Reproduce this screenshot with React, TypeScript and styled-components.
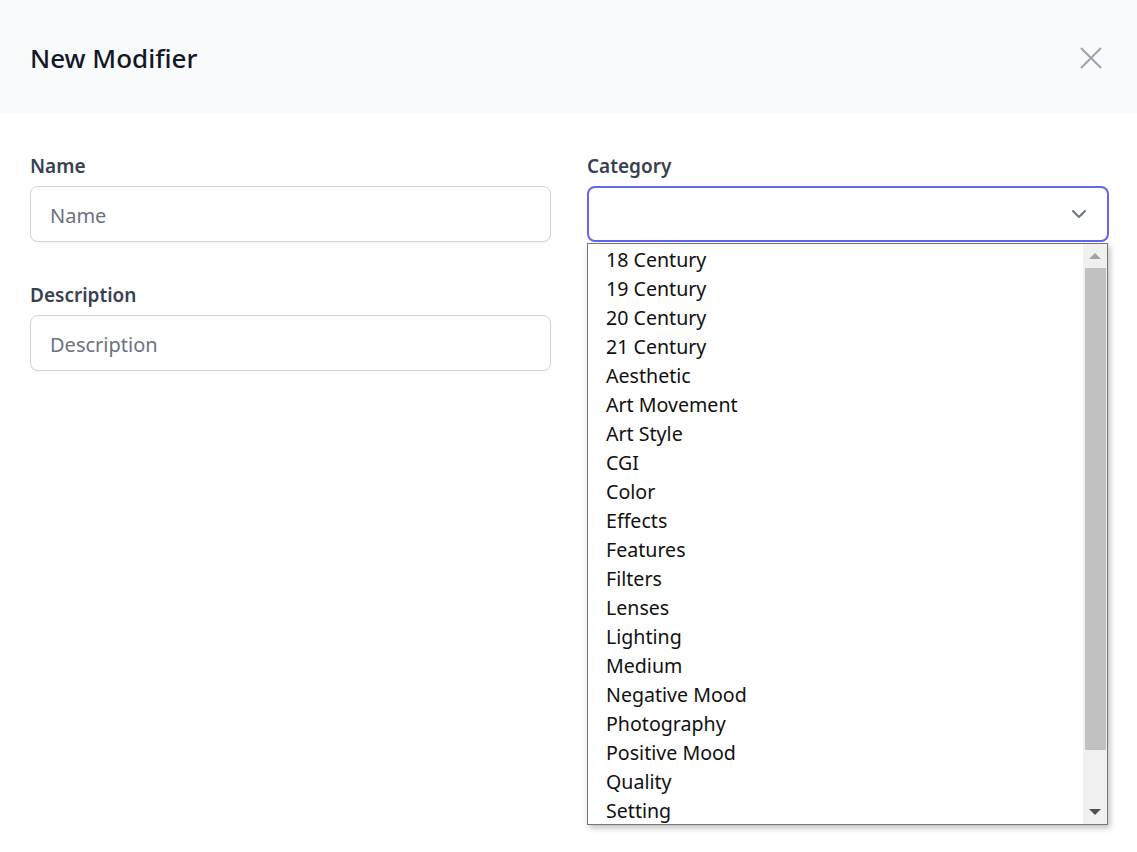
import React from "react";
import styled, { createGlobalStyle } from "styled-components";

const GlobalStyle = createGlobalStyle`
  html, body {
    margin: 0;
    padding: 0;
    background: #ffffff;
    font-family: "Noto Sans", "Open Sans", sans-serif;
  }
  * {
    box-sizing: border-box;
  }
`;

const categories = [
  "18 Century",
  "19 Century",
  "20 Century",
  "21 Century",
  "Aesthetic",
  "Art Movement",
  "Art Style",
  "CGI",
  "Color",
  "Effects",
  "Features",
  "Filters",
  "Lenses",
  "Lighting",
  "Medium",
  "Negative Mood",
  "Photography",
  "Positive Mood",
  "Quality",
  "Setting",
];

const Modal = styled.div`
  width: 1137px;
  height: 852px;
  background: #ffffff;
  overflow: hidden;
`;

const Header = styled.header`
  display: flex;
  align-items: center;
  justify-content: space-between;
  height: 113px;
  padding: 2px 35px 0 30px;
  background: #f9fafb;
`;

const Title = styled.h2`
  margin: 0;
  font-size: 26px;
  font-weight: 500;
  color: #111827;
`;

const CloseButton = styled.button`
  display: flex;
  align-items: center;
  justify-content: center;
  padding: 0;
  border: none;
  background: transparent;
  color: #9ca3af;
  cursor: pointer;
`;

const Form = styled.form`
  display: grid;
  grid-template-columns: 521px 522px;
  column-gap: 36px;
  row-gap: 40px;
  padding: 40px 28px 0 30px;
  align-items: start;
`;

const Field = styled.div`
  position: relative;
  display: flex;
  flex-direction: column;
  gap: 6px;
`;

const Label = styled.label`
  font-size: 19px;
  line-height: 27px;
  font-weight: 600;
  color: #374151;
`;

const TextInput = styled.input`
  height: 56px;
  width: 100%;
  padding: 3px 19px 0;
  border: 1px solid #d1d5db;
  border-radius: 8px;
  font-family: inherit;
  font-size: 20px;
  color: #111827;
  box-shadow: 0 1px 2px rgba(0, 0, 0, 0.05);
  outline: none;

  &::placeholder {
    color: #6b7280;
  }
`;

const SelectBox = styled.div`
  display: flex;
  align-items: center;
  justify-content: flex-end;
  height: 56px;
  padding: 0 20px;
  border: 2px solid #6366f1;
  border-radius: 8px;
  color: #6b7280;
`;

const Dropdown = styled.div`
  position: absolute;
  top: 90px;
  left: 0;
  display: flex;
  width: 521px;
  height: 582px;
  background: #ffffff;
  border: 1px solid #767676;
  box-shadow: 2px 3px 6px rgba(0, 0, 0, 0.25);
  z-index: 10;
`;

const OptionList = styled.ul`
  flex: 1;
  margin: 0;
  padding: 1px 0 0;
  list-style: none;
  overflow: hidden;
`;

const Option = styled.li`
  height: 29px;
  line-height: 29px;
  padding-left: 18px;
  font-size: 19.6px;
  color: #111111;
  white-space: nowrap;
`;

const Scrollbar = styled.div`
  display: flex;
  flex-direction: column;
  align-items: center;
  width: 24px;
  background: #f0f0f0;
`;

const ArrowButton = styled.div<{ $dark?: boolean }>`
  display: flex;
  align-items: center;
  justify-content: center;
  height: 24px;
  width: 100%;
  color: ${({ $dark }) => ($dark ? "#505050" : "#a3a3a3")};
`;

const Thumb = styled.div`
  width: 21px;
  height: 482px;
  background: #c1c1c1;
`;

const TrackSpace = styled.div`
  flex: 1;
`;

const Arrow = ({ up, dark }: { up?: boolean; dark?: boolean }) => (
  <ArrowButton $dark={dark}>
    <svg width="12" height="8" viewBox="0 0 12 8">
      <path d={up ? "M0 7 L6 1 L12 7 Z" : "M0 1 L12 1 L6 7 Z"} fill="currentColor" />
    </svg>
  </ArrowButton>
);

const App: React.FC = () => {
  return (
    <>
      <GlobalStyle />
      <Modal>
        <Header>
          <Title>New Modifier</Title>
          <CloseButton type="button" aria-label="Close">
            <svg width="22" height="22" viewBox="0 0 22 22" fill="none">
              <path d="M1 1 L21 21 M21 1 L1 21" stroke="currentColor" strokeWidth="2" />
            </svg>
          </CloseButton>
        </Header>
        <Form>
          <Field>
            <Label>Name</Label>
            <TextInput placeholder="Name" />
          </Field>
          <Field>
            <Label>Category</Label>
            <SelectBox>
              <svg width="16" height="10" viewBox="0 0 16 10" fill="none">
                <path d="M2 2 L8 8 L14 2" stroke="currentColor" strokeWidth="2" strokeLinecap="round" strokeLinejoin="round" />
              </svg>
            </SelectBox>
            <Dropdown>
              <OptionList>
                {categories.map((c) => (
                  <Option key={c}>{c}</Option>
                ))}
              </OptionList>
              <Scrollbar>
                <Arrow up />
                <Thumb />
                <TrackSpace />
                <Arrow dark />
              </Scrollbar>
            </Dropdown>
          </Field>
          <Field>
            <Label>Description</Label>
            <TextInput placeholder="Description" />
          </Field>
        </Form>
      </Modal>
    </>
  );
};

export default App;
